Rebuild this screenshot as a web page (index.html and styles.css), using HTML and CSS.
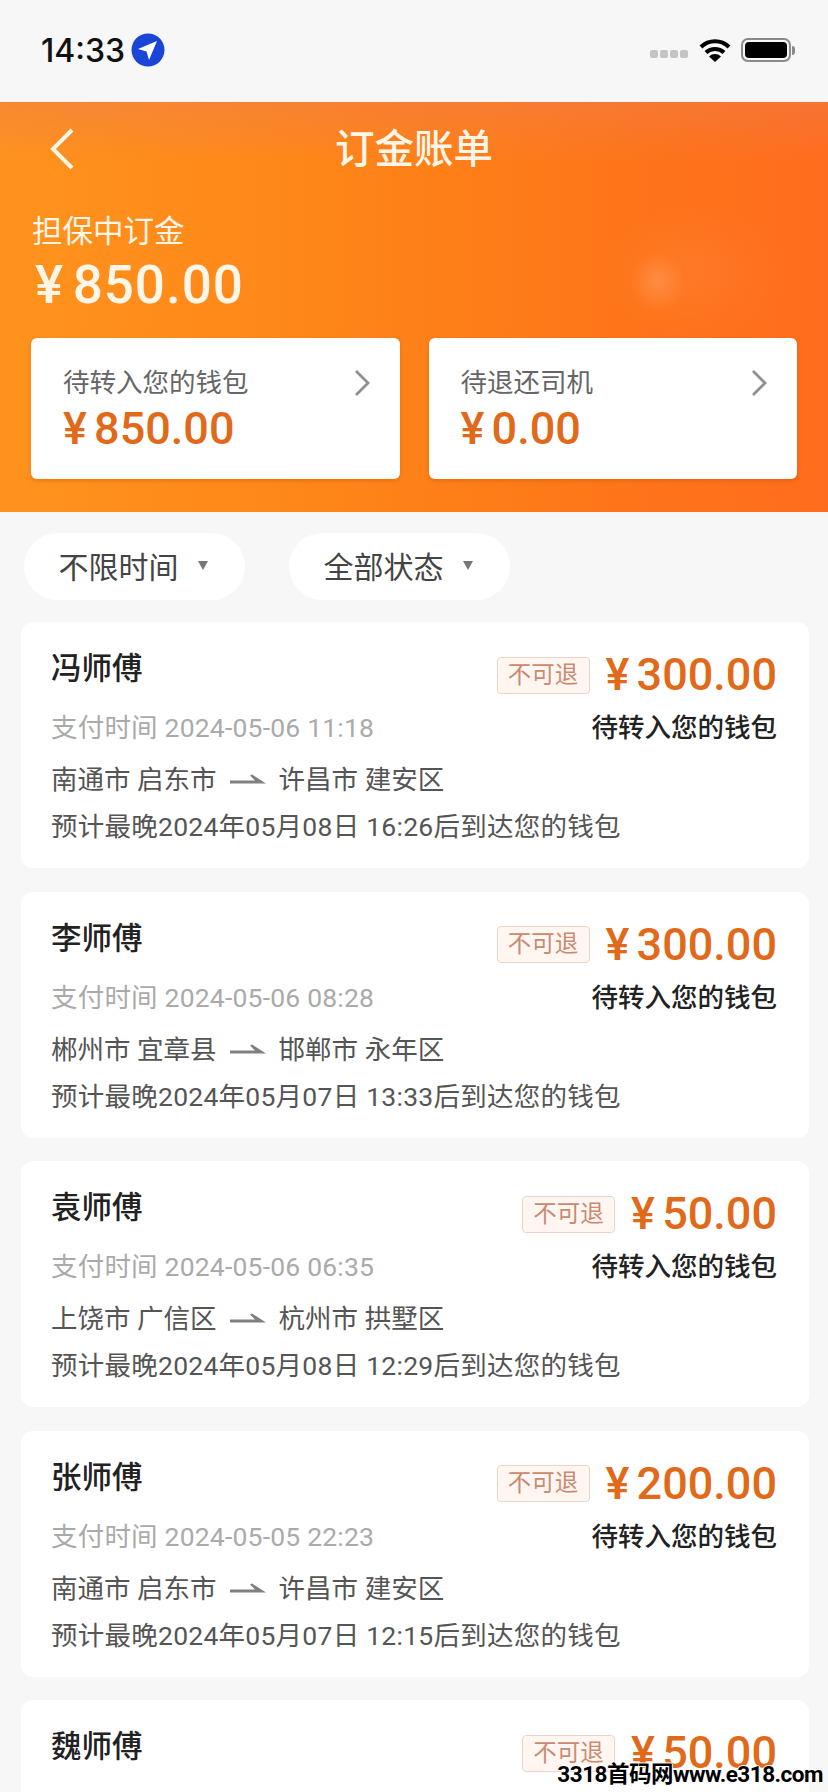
FILE: index.html
```html
<!DOCTYPE html>
<html>
<head>
    <meta charset="utf-8">
    <title>订金账单</title>
    <link rel="stylesheet" href="styles.css">
</head>
<body>
    <div class="status-bar">
        <div class="status-left">
            <span class="clock">14:33</span>
            <svg class="loc" width="34" height="34" viewBox="0 0 34 34">
                <circle cx="17" cy="17" r="16.5" fill="#1b45d6"/>
                <path d="M26 8 L7 16 L15.5 18.5 L18 27 Z" fill="#fff"/>
            </svg>
        </div>
        <div class="status-right">
            <span class="signal"><i></i><i></i><i></i><i></i></span>
            <svg class="wifi" width="34" height="26" viewBox="0 0 34 26">
                <path d="M3 10 A20 20 0 0 1 31 10 M8 15.5 A13 13 0 0 1 26 15.5" fill="none" stroke="#000" stroke-width="4"/>
                <path d="M17 25 L11 19.5 A8.5 8.5 0 0 1 23 19.5 Z" fill="#000"/>
            </svg>
            <span class="battery"><b></b></span>
            <span class="battery-cap"></span>
        </div>
    </div>

    <header class="top">
        <span class="glow glow-a"></span>
        <span class="glow glow-b"></span>
        <div class="nav">
            <svg class="back" width="26" height="42" viewBox="0 0 26 42">
                <path d="M23 2 L4 21 L23 40" fill="none" stroke="#fff6e8" stroke-width="4"/>
            </svg>
            <h1>订金账单</h1>
        </div>
        <div class="held-label">担保中订金</div>
        <div class="held-amount"><span class="yen">¥</span>850.00</div>
        <div class="summary">
            <div class="summary-card">
                <div class="summary-text">
                    <div class="summary-label">待转入您的钱包</div>
                    <div class="summary-amount"><span class="yen">¥</span>850.00</div>
                </div>
                <svg class="chevron" width="18" height="28" viewBox="0 0 18 28"><path d="M3 2 L15 14 L3 26" fill="none" stroke="#8f8f8f" stroke-width="2.8"/></svg>
            </div>
            <div class="summary-card">
                <div class="summary-text">
                    <div class="summary-label">待退还司机</div>
                    <div class="summary-amount"><span class="yen">¥</span>0.00</div>
                </div>
                <svg class="chevron" width="18" height="28" viewBox="0 0 18 28"><path d="M3 2 L15 14 L3 26" fill="none" stroke="#8f8f8f" stroke-width="2.8"/></svg>
            </div>
        </div>
    </header>

    <div class="filters">
        <div class="pill">不限时间<span class="caret"></span></div>
        <div class="pill">全部状态<span class="caret"></span></div>
    </div>

    <div class="list">
        <div class="card">
            <div class="row-top">
                <span class="name">冯师傅</span>
                <span class="right-top"><span class="tag">不可退</span><span class="price"><span class="yen">¥</span>300.00</span></span>
            </div>
            <div class="row-pay">
                <span class="paid">支付时间 2024-05-06 11:18</span>
                <span class="state">待转入您的钱包</span>
            </div>
            <div class="route">南通市 启东市<svg class="arrow" width="36" height="12" viewBox="0 0 36 12"><path d="M0 6.5 H25 L20 1.5 L22 0.5 L36 9.5 H0 Z" fill="#808080"/></svg>许昌市 建安区</div>
            <div class="eta">预计最晚2024年05月08日 16:26后到达您的钱包</div>
        </div>
        <div class="card">
            <div class="row-top">
                <span class="name">李师傅</span>
                <span class="right-top"><span class="tag">不可退</span><span class="price"><span class="yen">¥</span>300.00</span></span>
            </div>
            <div class="row-pay">
                <span class="paid">支付时间 2024-05-06 08:28</span>
                <span class="state">待转入您的钱包</span>
            </div>
            <div class="route">郴州市 宜章县<svg class="arrow" width="36" height="12" viewBox="0 0 36 12"><path d="M0 6.5 H25 L20 1.5 L22 0.5 L36 9.5 H0 Z" fill="#808080"/></svg>邯郸市 永年区</div>
            <div class="eta">预计最晚2024年05月07日 13:33后到达您的钱包</div>
        </div>
        <div class="card">
            <div class="row-top">
                <span class="name">袁师傅</span>
                <span class="right-top"><span class="tag">不可退</span><span class="price"><span class="yen">¥</span>50.00</span></span>
            </div>
            <div class="row-pay">
                <span class="paid">支付时间 2024-05-06 06:35</span>
                <span class="state">待转入您的钱包</span>
            </div>
            <div class="route">上饶市 广信区<svg class="arrow" width="36" height="12" viewBox="0 0 36 12"><path d="M0 6.5 H25 L20 1.5 L22 0.5 L36 9.5 H0 Z" fill="#808080"/></svg>杭州市 拱墅区</div>
            <div class="eta">预计最晚2024年05月08日 12:29后到达您的钱包</div>
        </div>
        <div class="card">
            <div class="row-top">
                <span class="name">张师傅</span>
                <span class="right-top"><span class="tag">不可退</span><span class="price"><span class="yen">¥</span>200.00</span></span>
            </div>
            <div class="row-pay">
                <span class="paid">支付时间 2024-05-05 22:23</span>
                <span class="state">待转入您的钱包</span>
            </div>
            <div class="route">南通市 启东市<svg class="arrow" width="36" height="12" viewBox="0 0 36 12"><path d="M0 6.5 H25 L20 1.5 L22 0.5 L36 9.5 H0 Z" fill="#808080"/></svg>许昌市 建安区</div>
            <div class="eta">预计最晚2024年05月07日 12:15后到达您的钱包</div>
        </div>
        <div class="card">
            <div class="row-top">
                <span class="name">魏师傅</span>
                <span class="right-top"><span class="tag">不可退</span><span class="price"><span class="yen">¥</span>50.00</span></span>
            </div>
        </div>
    </div>

    <div class="watermark">3318首码网www.e318.com</div>
</body>
</html>
```

FILE: styles.css
```css
html {
    height: 100%;
    overflow: hidden;
}
html, body {
    margin: 0;
    padding: 0;
}
body {
    position: relative;
    width: 828px;
    height: 1792px;
    overflow: hidden;
    background-color: #f7f7f7;
    font-family: Roboto, "Noto Sans CJK SC", sans-serif;
    color: #222;
}

/* status bar */
.status-bar {
    height: 102px;
    display: flex;
    justify-content: space-between;
    align-items: center;
    padding: 0 33px 2px 41px;
    box-sizing: border-box;
}
.status-left {
    display: flex;
    align-items: center;
    gap: 6px;
}
.clock {
    font-family: Inter, sans-serif;
    font-size: 32px;
    font-weight: 500;
    color: #111;
}
.status-right {
    display: flex;
    align-items: center;
}
.signal {
    display: flex;
    gap: 2px;
    margin: 8px 10px 0 0;
}
.signal i {
    width: 8px;
    height: 8px;
    border-radius: 2px;
    background-color: #c4c4c4;
}
.wifi {
    margin-right: 9px;
}
.battery {
    width: 50px;
    height: 24px;
    box-sizing: border-box;
    border: 2px solid #8a8a8a;
    border-radius: 7px;
    padding: 2px;
    display: flex;
}
.battery b {
    flex: 1;
    background-color: #000;
    border-radius: 4px;
}
.battery-cap {
    width: 3px;
    height: 9px;
    margin-left: 1px;
    background-color: #8a8a8a;
    border-radius: 0 3px 3px 0;
}

/* orange header */
.top {
    position: relative;
    height: 410px;
    box-sizing: border-box;
    padding: 0 31px;
    background:
        linear-gradient(180deg, rgba(238, 125, 80, 0.45), rgba(238, 125, 80, 0) 60px),
        linear-gradient(90deg, #ff931d 0%, #fe8518 40%, #fe7519 75%, #ff6c1d 100%);
    color: #fff6e8;
    overflow: hidden;
}
.glow {
    position: absolute;
    border-radius: 50%;
}
.glow-a {
    left: 600px;
    top: 100px;
    width: 190px;
    height: 140px;
    background: radial-gradient(closest-side, rgba(255, 255, 255, 0.05), rgba(255, 255, 255, 0));
}
.glow-b {
    left: 630px;
    top: 150px;
    width: 56px;
    height: 60px;
    background: radial-gradient(closest-side, rgba(255, 255, 255, 0.16), rgba(255, 255, 255, 0));
}
.nav {
    position: relative;
    height: 56px;
    margin-top: 20px;
    display: flex;
    justify-content: center;
    align-items: center;
}
.back {
    position: absolute;
    left: 18px;
    top: 6px;
}
.nav h1 {
    margin: 0;
    font-size: 39.5px;
    font-weight: 500;
    line-height: 56px;
}
.held-label {
    position: relative;
    margin-top: 32px;
    margin-left: 1px;
    font-size: 30.5px;
    line-height: 44px;
}
.held-amount {
    position: relative;
    margin-top: 1px;
    padding-left: 4px;
    font-size: 53px;
    font-weight: 500;
    line-height: 60px;
    letter-spacing: 1px;
}
.yen {
    margin-right: 0.16em;
}
.summary {
    position: relative;
    margin-top: 23px;
    display: flex;
    gap: 29px;
}
.summary-card {
    width: 369px;
    height: 141px;
    box-sizing: border-box;
    padding: 26px 32px 0;
    background-color: #fff;
    border-radius: 6px;
    display: flex;
    justify-content: space-between;
    box-shadow: 0 2px 4px rgba(190, 80, 0, 0.35);
}
.summary-label {
    font-size: 26.5px;
    line-height: 38px;
    color: #666;
}
.summary-amount {
    margin-top: 2px;
    font-size: 45px;
    font-weight: 500;
    line-height: 50px;
    color: #e0691a;
}
.chevron {
    margin-top: 5px;
    margin-right: -3px;
}

/* filter pills */
.filters {
    display: flex;
    gap: 44px;
    padding: 21px 0 0 24px;
}
.pill {
    width: 221px;
    height: 67px;
    box-sizing: border-box;
    padding: 0 3px 3px 0;
    display: flex;
    align-items: center;
    justify-content: center;
    gap: 19px;
    background-color: #fff;
    border-radius: 34px;
    font-size: 30px;
    color: #444;
}
.caret {
    width: 0;
    height: 0;
    border-left: 5px solid transparent;
    border-right: 5px solid transparent;
    border-top: 9px solid #777;
}

/* order list */
.list {
    padding: 22px 19px 0 21px;
    display: flex;
    flex-direction: column;
    gap: 23.5px;
}
.card {
    height: 246px;
    box-sizing: border-box;
    padding: 28px 32px 0 30px;
    background-color: #fff;
    border-radius: 12px;
    flex-shrink: 0;
}
.row-top {
    display: flex;
    justify-content: space-between;
    height: 50px;
}
.name {
    font-size: 30.5px;
    font-weight: 500;
    line-height: 38px;
    color: #222;
}
.right-top {
    display: flex;
    align-items: center;
    gap: 16px;
}
.tag {
    width: 93px;
    height: 37px;
    box-sizing: border-box;
    border: 1px solid #ecd5c8;
    border-radius: 4px;
    background-color: #fff6f2;
    color: #c98a70;
    font-size: 23.5px;
    line-height: 35px;
    text-align: center;
}
.price {
    font-size: 45px;
    font-weight: 500;
    line-height: 50px;
    color: #e0691a;
}
.row-pay {
    display: flex;
    justify-content: space-between;
    margin-top: 9px;
    line-height: 38px;
}
.paid {
    font-size: 26.5px;
    letter-spacing: 0.2px;
    color: #aaa;
}
.state {
    font-size: 26.5px;
    font-weight: 500;
    color: #222;
}
.route {
    margin-top: 14px;
    font-size: 26.5px;
    line-height: 38px;
    color: #555;
}
.arrow {
    margin: 0 13px;
    vertical-align: 3px;
}
.eta {
    margin-top: 9px;
    font-size: 26.5px;
    letter-spacing: 0.25px;
    line-height: 38px;
    color: #555;
}

/* site stamp over the bottom corner */
.watermark {
    position: absolute;
    right: 5px;
    bottom: 8px;
    font-size: 22.5px;
    font-weight: 700;
    line-height: 20px;
    color: #000;
    letter-spacing: -0.5px;
    text-shadow: 1px 0 #fff, -1px 0 #fff, 0 1px #fff, 0 -1px #fff;
}
```
